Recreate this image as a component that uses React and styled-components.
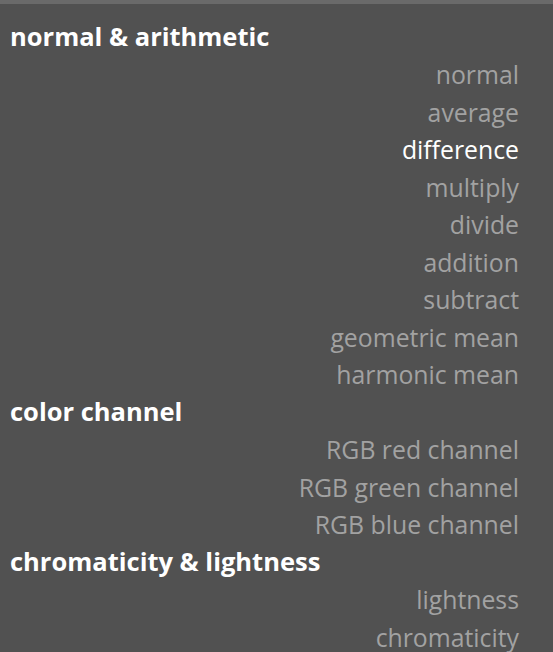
import React from "react";
import styled, { createGlobalStyle } from "styled-components";

const Global = createGlobalStyle`
  html, body { margin: 0; padding: 0; background: #515151; }
  body { font-family: "Open Sans", "Noto Sans", sans-serif; }
`;

const Panel = styled.div`
  width: 553px;
  height: 652px;
  background: #515151;
  border-top: 4px solid #6a6a6a;
  box-sizing: border-box;
  overflow: hidden;
  padding-top: 14px;
`;

const List = styled.ul`
  list-style: none;
  margin: 0;
  padding: 0 34px 0 10px;
  display: flex;
  flex-direction: column;
`;

const Header = styled.li`
  height: 37.5px;
  box-sizing: border-box;
  padding-bottom: 2px;
  display: flex;
  align-items: center;
  font-weight: 700;
  font-size: 25.5px;
  color: #ffffff;
  white-space: nowrap;
`;

const Item = styled.li`
  height: 37.5px;
  display: flex;
  align-items: center;
  justify-content: flex-end;
  font-size: 24.8px;
  color: ${(p) => (p.$active ? "#ffffff" : "#a2a2a2")};
  white-space: nowrap;
`;

const groups = [
  {
    title: "normal & arithmetic",
    items: [
      "normal",
      "average",
      "difference",
      "multiply",
      "divide",
      "addition",
      "subtract",
      "geometric mean",
      "harmonic mean",
    ],
  },
  {
    title: "color channel",
    items: ["RGB red channel", "RGB green channel", "RGB blue channel"],
  },
  {
    title: "chromaticity & lightness",
    items: ["lightness", "chromaticity"],
  },
];

export default function App() {
  return (
    <>
      <Global />
      <Panel>
        <List>
          {groups.map((g) => (
            <React.Fragment key={g.title}>
              <Header>{g.title}</Header>
              {g.items.map((it) => (
                <Item key={it} $active={it === "difference"}>
                  {it}
                </Item>
              ))}
            </React.Fragment>
          ))}
        </List>
      </Panel>
    </>
  );
}
